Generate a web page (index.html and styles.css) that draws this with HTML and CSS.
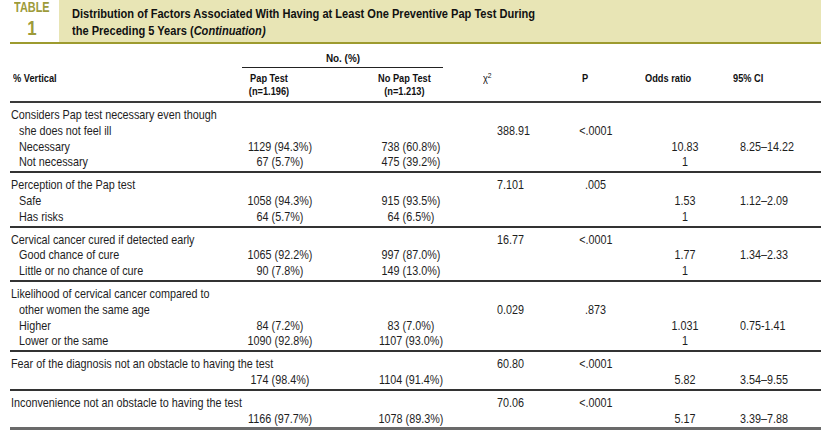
FILE: index.html
```html
<!DOCTYPE html>
<html>
<head>
<meta charset="utf-8">
<link rel="stylesheet" href="styles.css">
</head>
<body>
<div class="page">
  <div class="cap">
    <div class="cap-num"><span class="cap-word">TABLE</span><span class="cap-one">1</span></div>
    <div class="cap-title"><span class="tt">Distribution of Factors Associated With Having at Least One Preventive Pap Test During<br>the Preceding 5 Years (<i>Continuation)</i></span></div>
  </div>
  <div class="thead">
    <div class="span-no"><div class="span-inner"><span class="n">No. (%)</span></div></div>
    <div class="h h-lab"><span class="ht">% Vertical</span></div>
    <div class="h h-pap"><span class="ht">Pap Test<br>(n=1.196)</span></div>
    <div class="h h-nop"><span class="ht">No Pap Test<br>(n=1.213)</span></div>
    <div class="h h-chi"><span class="ht">χ<sup>2</sup></span></div>
    <div class="h h-p"><span class="ht">P</span></div>
    <div class="h h-or"><span class="ht">Odds ratio</span></div>
    <div class="h h-ci"><span class="ht">95% CI</span></div>
  </div>

  <div class="grp">
    <div class="col lab"><div class="l">Considers Pap test necessary even though</div><div class="l sub">she does not feel ill</div><div class="l sub">Necessary</div><div class="l sub">Not necessary</div></div>
    <div class="col pap"><div class="l">&nbsp;</div><div class="l">&nbsp;</div><div class="l">1129 (94.3%)</div><div class="l">67 (5.7%)</div></div>
    <div class="col nop"><div class="l">&nbsp;</div><div class="l">&nbsp;</div><div class="l">738 (60.8%)</div><div class="l">475 (39.2%)</div></div>
    <div class="col chi"><div class="l">&nbsp;</div><div class="l">388.91</div></div>
    <div class="col pv"><div class="l">&nbsp;</div><div class="l lt">&lt;.0001</div></div>
    <div class="col or"><div class="l">&nbsp;</div><div class="l">&nbsp;</div><div class="l">10.83</div><div class="l">1</div></div>
    <div class="col ci"><div class="l">&nbsp;</div><div class="l">&nbsp;</div><div class="l">8.25–14.22</div></div>
  </div>

  <div class="grp">
    <div class="col lab"><div class="l">Perception of the Pap test</div><div class="l sub">Safe</div><div class="l sub">Has risks</div></div>
    <div class="col pap"><div class="l">&nbsp;</div><div class="l">1058 (94.3%)</div><div class="l">64 (5.7%)</div></div>
    <div class="col nop"><div class="l">&nbsp;</div><div class="l">915 (93.5%)</div><div class="l">64 (6.5%)</div></div>
    <div class="col chi"><div class="l">7.101</div></div>
    <div class="col pv"><div class="l">.005</div></div>
    <div class="col or"><div class="l">&nbsp;</div><div class="l">1.53</div><div class="l">1</div></div>
    <div class="col ci"><div class="l">&nbsp;</div><div class="l">1.12–2.09</div></div>
  </div>

  <div class="grp">
    <div class="col lab"><div class="l">Cervical cancer cured if detected early</div><div class="l sub">Good chance of cure</div><div class="l sub">Little or no chance of cure</div></div>
    <div class="col pap"><div class="l">&nbsp;</div><div class="l">1065 (92.2%)</div><div class="l">90 (7.8%)</div></div>
    <div class="col nop"><div class="l">&nbsp;</div><div class="l">997 (87.0%)</div><div class="l">149 (13.0%)</div></div>
    <div class="col chi"><div class="l">16.77</div></div>
    <div class="col pv"><div class="l lt">&lt;.0001</div></div>
    <div class="col or"><div class="l">&nbsp;</div><div class="l">1.77</div><div class="l">1</div></div>
    <div class="col ci"><div class="l">&nbsp;</div><div class="l">1.34–2.33</div></div>
  </div>

  <div class="grp">
    <div class="col lab"><div class="l">Likelihood of cervical cancer compared to</div><div class="l sub">other women the same age</div><div class="l sub">Higher</div><div class="l sub">Lower or the same</div></div>
    <div class="col pap"><div class="l">&nbsp;</div><div class="l">&nbsp;</div><div class="l">84 (7.2%)</div><div class="l">1090 (92.8%)</div></div>
    <div class="col nop"><div class="l">&nbsp;</div><div class="l">&nbsp;</div><div class="l">83 (7.0%)</div><div class="l">1107 (93.0%)</div></div>
    <div class="col chi"><div class="l">&nbsp;</div><div class="l">0.029</div></div>
    <div class="col pv"><div class="l">&nbsp;</div><div class="l">.873</div></div>
    <div class="col or"><div class="l">&nbsp;</div><div class="l">&nbsp;</div><div class="l">1.031</div><div class="l">1</div></div>
    <div class="col ci"><div class="l">&nbsp;</div><div class="l">&nbsp;</div><div class="l">0.75-1.41</div></div>
  </div>

  <div class="grp">
    <div class="col lab"><div class="l">Fear of the diagnosis not an obstacle to having the test</div></div>
    <div class="col pap"><div class="l">&nbsp;</div><div class="l">174 (98.4%)</div></div>
    <div class="col nop"><div class="l">&nbsp;</div><div class="l">1104 (91.4%)</div></div>
    <div class="col chi"><div class="l">60.80</div></div>
    <div class="col pv"><div class="l lt">&lt;.0001</div></div>
    <div class="col or"><div class="l">&nbsp;</div><div class="l">5.82</div></div>
    <div class="col ci"><div class="l">&nbsp;</div><div class="l">3.54–9.55</div></div>
  </div>

  <div class="grp last">
    <div class="col lab"><div class="l">Inconvenience not an obstacle to having the test</div></div>
    <div class="col pap"><div class="l">&nbsp;</div><div class="l">1166 (97.7%)</div></div>
    <div class="col nop"><div class="l">&nbsp;</div><div class="l">1078 (89.3%)</div></div>
    <div class="col chi"><div class="l">70.06</div></div>
    <div class="col pv"><div class="l lt">&lt;.0001</div></div>
    <div class="col or"><div class="l">&nbsp;</div><div class="l">5.17</div></div>
    <div class="col ci"><div class="l">&nbsp;</div><div class="l">3.39–7.88</div></div>
  </div>
</div>
</body>
</html>
```

FILE: styles.css
```css
* { box-sizing: border-box; }
html, body { margin: 0; padding: 0; background: #fff; }
body {
  font-family: "Liberation Sans", Arial, sans-serif;
  color: #1e1e1e;
  width: 824px;
  height: 437px;
  overflow: hidden;
}
.page { padding-left: 10px; width: 821px; }

/* caption */
.cap {
  display: flex;
  height: 44px;
  border-bottom: 2px solid #9d9b2f;
}
.cap-num {
  width: 49px;
  padding-right: 5px;
  display: flex;
  flex-direction: column;
  align-items: center;
  color: #9d9b3a;
  font-weight: bold;
}
.cap-word {
  font-size: 14px;
  line-height: 13px;
  margin-top: 1px;
  transform: scaleX(.78);
}
.cap-one {
  font-size: 21px;
  line-height: 22px;
  margin-top: 3px;
  transform: scaleX(.8);
}
.cap-title {
  flex: 1;
  background: #e8e5b5;
  padding: 5px 0 0 13px;
  font-size: 13.5px;
  line-height: 17px;
  font-weight: bold;
  color: #111;
  white-space: nowrap;
}
.tt {
  display: block;
  transform: scaleX(.82);
  transform-origin: 0 50%;
}

/* table head */
.thead, .grp {
  display: grid;
  grid-template-columns: 220px 100px 148px 97px 65px 90px 91px;
}
.thead {
  border-bottom: 2px solid #3a3a3a;
  font-weight: bold;
  font-size: 11px;
  color: #111;
}
.span-no {
  grid-column: 2 / 4;
  grid-row: 1;
  padding: 7px 0 0 12px;
}
.span-inner {
  width: 201px;
  text-align: center;
  line-height: 14px;
  padding-bottom: 2px;
  border-bottom: 1px solid #222;
}
.n { display: inline-block; transform: scaleX(.9); }
.h {
  grid-row: 2;
  line-height: 13px;
  padding: 4px 0 3px;
  white-space: nowrap;
}
.ht {
  display: inline-block;
  transform: scaleX(.84);
  transform-origin: 0 50%;
}
.h sup { font-size: 8px; line-height: 0; vertical-align: 4px; }
.h-lab { padding-left: 3px; }
.h-pap { text-align: center; padding-right: 22px; }
.h-nop { text-align: center; }
.h-pap .ht, .h-nop .ht { transform-origin: 50% 50%; }
.h-chi { padding-left: 5px; font-weight: normal; }
.h-p { padding-left: 7px; }
.h-or { padding-left: 5px; }
.h-ci { padding-left: 3px; }

/* body groups */
.grp {
  font-size: 13px;
  border-bottom: 2px solid #333;
  padding: 4px 0 1px;
}
.grp.last { border-bottom: 3px solid #6a6a6a; }
.col { display: flex; flex-direction: column; }
.l {
  line-height: 15.8px;
  white-space: nowrap;
  transform: scaleX(.83);
  transform-origin: 0 50%;
}
.lab .l { margin-left: 1px; }
.lab .l.sub { margin-left: 9px; }
.pap { text-align: center; }
.nop { text-align: center; padding-left: 14px; }
.pap .l, .nop .l, .or .l { transform-origin: 50% 50%; }
.chi { padding-left: 19px; }
.pv { padding-left: 10px; }
.pv .lt { text-indent: -7px; }
.or { text-align: center; }
.ci { padding-left: 10px; }
```
